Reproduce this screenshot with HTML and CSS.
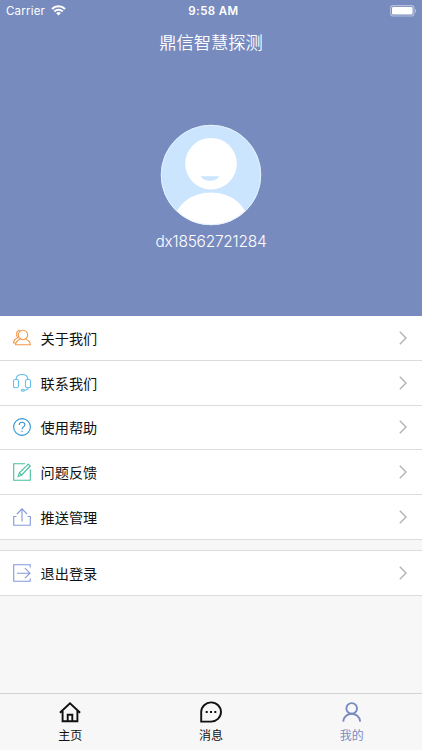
FILE: index.html
```html
<!DOCTYPE html>
<html lang="zh-CN">
<head>
    <meta charset="UTF-8">
    <meta name="viewport" content="width=device-width, initial-scale=1.0">
    <title>鼎信智慧探测</title>
    <link rel="stylesheet" href="styles.css">
</head>
<body>
    <header class="profile">
        <div class="status-bar">
            <div class="carrier">
                <span>Carrier</span>
                <svg width="15" height="11" viewBox="0 0 15 11" fill="none" stroke="#fff" stroke-width="2.1">
                    <path d="M1 3.900a9.200 9.200 0 0 1 13 0M3.300 6.500a6 6 0 0 1 8.400 0"/>
                    <path d="M7.500 10.500L5.200 8.200a3.200 3.200 0 0 1 4.600 0z" fill="#fff" stroke="none"/>
                </svg>
            </div>
            <div class="time">9:58 AM</div>
            <svg class="battery" width="27" height="12" viewBox="0 0 27 12">
                <rect x=".6" y=".6" width="23.400" height="10.400" rx="2.600" fill="none" stroke="#b5c0de" stroke-width="1.100"/>
                <rect x="2" y="2" width="20.600" height="7.600" rx="1.300" fill="#fff"/>
                <path d="M25 4v4c1.700-.6 1.700-3.400 0-4z" fill="#b5c0de"/>
            </svg>
        </div>
        <h1>鼎信智慧探测</h1>
        <svg class="avatar" width="102" height="102" viewBox="0 0 102 102">
            <defs>
                <clipPath id="face"><circle cx="51" cy="51" r="50"/></clipPath>
            </defs>
            <circle cx="51" cy="51" r="50" fill="#cce5ff"/>
            <g clip-path="url(#face)">
                <circle cx="51" cy="39.700" r="25.800" fill="#fff"/>
                <path d="M40.500 52.300h19c-4 6-15 6-19 0z" fill="#cce5ff"/>
                <ellipse cx="51" cy="99" rx="37" ry="30.500" fill="#fff"/>
            </g>
            <circle cx="51" cy="51" r="49.800" fill="none" stroke="#e5f0fd"/>
        </svg>
        <div class="username">dx18562721284</div>
    </header>

    <main>
        <ul class="menu">
            <li>
                <svg class="icon about" viewBox="0 0 18 18">
                    <circle cx="10" cy="5.900" r="4.700"/>
                    <path d="M7.500 10C4.500 11.200 2.800 13 2.600 15.700h14.800c-.2-2.700-1.900-4.500-4.900-5.700"/>
                    <path d="M7.400 1.300C3.200.9 2.500 6.500 5 8.800 2 9.900.6 11.500.6 14h2.300"/>
                </svg>
                <span>关于我们</span>
                <svg class="arrow" viewBox="0 0 8 14"><path d="M.8.8L7 7 .8 13.200"/></svg>
            </li>
            <li>
                <svg class="icon contact" viewBox="0 0 18 18">
                    <rect x=".5" y="5.500" width="5" height="8.300" rx="1.800"/>
                    <rect x="12.500" y="5.500" width="5" height="8.300" rx="1.800"/>
                    <path d="M3 5.500C3.500-1.100 14.500-1.100 15 5.500M15 13.800c0 1.700-1.700 2.500-3.800 2.500"/>
                    <ellipse cx="9.900" cy="16.300" rx="1.500" ry="1"/>
                </svg>
                <span>联系我们</span>
                <svg class="arrow" viewBox="0 0 8 14"><path d="M.8.8L7 7 .8 13.200"/></svg>
            </li>
            <li>
                <svg class="icon help" viewBox="0 0 18 18">
                    <circle cx="9" cy="9" r="8.400"/>
                    <path d="M6.200 7.100c0-4 5.800-3.700 5.700-.3 0 2.100-2.800 2.200-2.800 4.400M9.100 12.700v1.400"/>
                </svg>
                <span>使用帮助</span>
                <svg class="arrow" viewBox="0 0 8 14"><path d="M.8.8L7 7 .8 13.200"/></svg>
            </li>
            <li>
                <svg class="icon feedback" viewBox="0 0 18 18">
                    <path d="M12 .7H.7v16.600h16.600V6.500"/>
                    <path d="M15.200 1.200l2 1.800-8.700 9.200-3.300 1.200 1.200-3.500zM6.400 9.900l2.100 2.300"/>
                </svg>
                <span>问题反馈</span>
                <svg class="arrow" viewBox="0 0 8 14"><path d="M.8.8L7 7 .8 13.200"/></svg>
            </li>
            <li>
                <svg class="icon push" viewBox="0 0 18 18">
                    <path d="M3.500 8.500H.7v8.800h16.600V8.500h-2.800M9 13.500V1M4 6L9 .9 14 6"/>
                </svg>
                <span>推送管理</span>
                <svg class="arrow" viewBox="0 0 8 14"><path d="M.8.8L7 7 .8 13.200"/></svg>
            </li>
        </ul>

        <ul class="menu logout">
            <li>
                <svg class="icon exit" viewBox="0 0 18 18">
                    <path d="M17.200 3.600V.7H.7v16.600h16.500v-2.900M4 9.200h13M11.900 4.200L17 9.200l-5.100 5"/>
                </svg>
                <span>退出登录</span>
                <svg class="arrow" viewBox="0 0 8 14"><path d="M.8.8L7 7 .8 13.200"/></svg>
            </li>
        </ul>
    </main>

    <nav class="tab-bar">
        <div class="tab">
            <svg width="24" height="24" viewBox="0 0 24 24">
                <path d="M1.900 12.700L12 3.200l10.100 9.500M4.600 11v10.200h14.800V11M9.700 21v-6.300h4.600V21"/>
            </svg>
            <span>主页</span>
        </div>
        <div class="tab">
            <svg width="24" height="24" viewBox="0 0 24 24">
                <path d="M2.200 21.600V12A9.900 9.600 0 1 1 12 21.600z"/>
                <path class="dots" d="M6.700 11h2v2h-2zM11 11h2v2h-2zM15.300 11h2v2h-2z"/>
            </svg>
            <span>消息</span>
        </div>
        <div class="tab active">
            <svg width="24" height="24" viewBox="0 0 24 24">
                <circle cx="11.700" cy="8.400" r="5.300"/>
                <path d="M3.200 21.600c.9-10.400 16.100-10.400 17 0"/>
            </svg>
            <span>我的</span>
        </div>
    </nav>
</body>
</html>
```

FILE: styles.css
```css
:root {
    --primary-color: #778bbe;
    --background-color: #f7f7f7;
    --line-color: #dcdcdc;
}

* {
    box-sizing: border-box;
}

body {
    display: flex;
    flex-direction: column;
    height: 100vh;
    margin: 0;
    background: var(--background-color);
    color: #111;
    font-family: Inter, "Noto Sans CJK SC", sans-serif;
    overflow: hidden;
}

.profile {
    display: flex;
    flex-direction: column;
    align-items: center;
    height: 316px;
    flex-shrink: 0;
    background: var(--primary-color);
    color: #fff;
}

.status-bar {
    display: grid;
    grid-template-columns: 1fr auto 1fr;
    align-items: center;
    width: 100%;
    height: 22px;
    padding: 0 5px 0 6px;
    font-size: 11.5px;
}

.carrier {
    display: flex;
    align-items: center;
    gap: 6px;
    letter-spacing: 0.2px;
}

.carrier svg {
    margin-top: -2px;
}

.time {
    padding-left: 4px;
    font-weight: 600;
    letter-spacing: 0.4px;
}

.battery {
    justify-self: end;
}

h1 {
    margin: 6px 0 0;
    font-size: 17.3px;
    font-weight: 350;
    line-height: 30px;
}

.avatar {
    margin-top: 66px;
}

.username {
    margin-top: 5px;
    font-size: 15.5px;
    font-weight: 300;
    letter-spacing: -0.25px;
    line-height: 22px;
}

main {
    flex: 1;
}

.menu {
    margin: 0;
    padding: 0;
    list-style: none;
    background: #fff;
}

.menu li {
    display: flex;
    align-items: center;
    height: 44.8px;
    padding: 0 15px 0 12.5px;
    border-bottom: 1px solid var(--line-color);
    font-size: 14.2px;
}

.menu span {
    flex: 1;
    margin-left: 10px;
}

.logout {
    margin-top: 10px;
    border-top: 1px solid var(--line-color);
}

.icon {
    width: 18px;
    height: 18px;
    fill: none;
    stroke-width: 1.1;
}

.about {
    stroke: #f2994a;
}

.contact {
    stroke: #65bfe8;
}

.help {
    stroke: #2f93d3;
}

.feedback {
    stroke: #45be9e;
}

.push,
.exit {
    stroke: #8299da;
}

.arrow {
    width: 8px;
    height: 14px;
    fill: none;
    stroke: #b2b2b2;
    stroke-width: 1.4;
}

.tab-bar {
    display: flex;
    height: 57px;
    border-top: 1px solid #d2d2d2;
}

.tab {
    display: flex;
    flex: 1;
    flex-direction: column;
    align-items: center;
    padding-top: 6px;
    font-size: 12px;
    line-height: 18px;
}

.tab svg {
    margin-bottom: 3px;
    fill: none;
    stroke: #111;
    stroke-width: 1.9;
}

.tab .dots {
    fill: #111;
    stroke: none;
}

.active {
    color: var(--primary-color);
}

.active svg {
    stroke: var(--primary-color);
}
```
